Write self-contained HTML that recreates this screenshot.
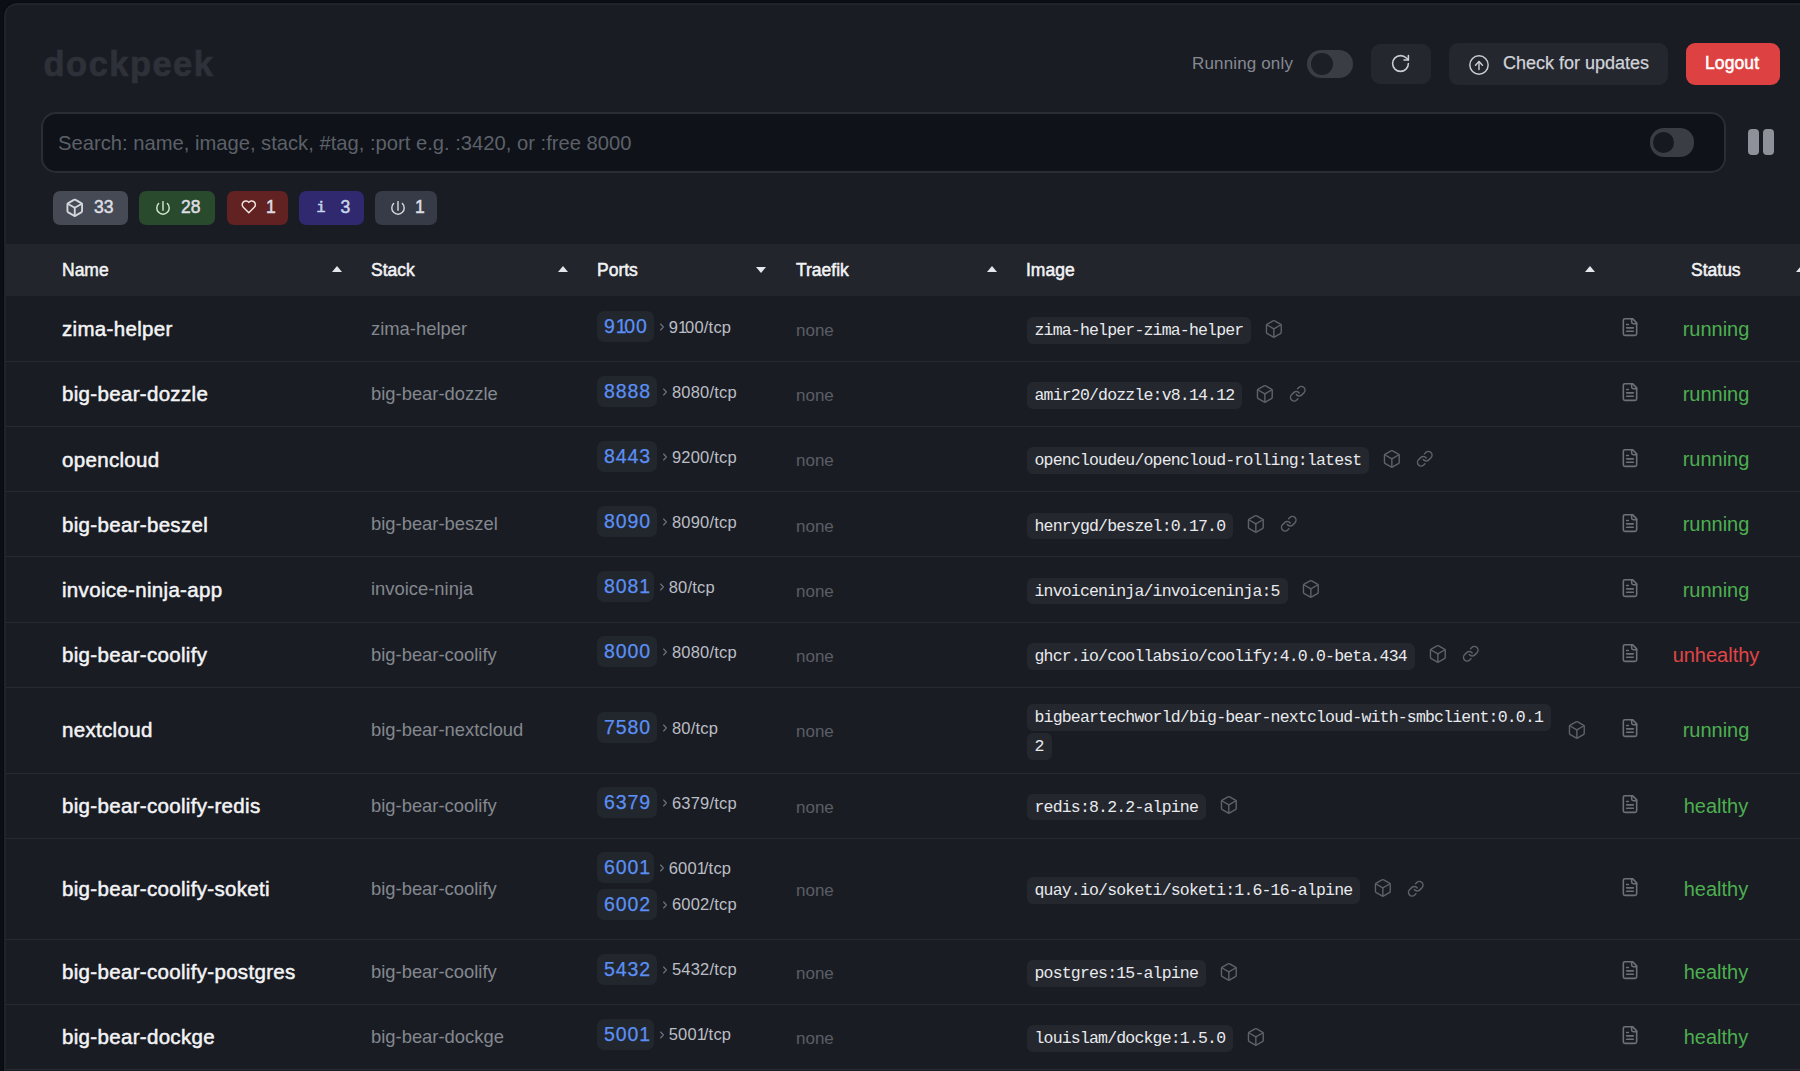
<!DOCTYPE html>
<html><head><meta charset="utf-8">
<style>
*{box-sizing:border-box;margin:0;padding:0}
html,body{width:1800px;height:1071px;overflow:hidden;background:#0b0e15;font-family:"Liberation Sans",sans-serif}
.abs{position:absolute}
.card{position:absolute;left:4px;top:3px;width:1850px;height:1200px;background:#1a1c23;border:2px solid #202328;border-radius:13px;box-shadow:0 0 0 1px #070a10}
.t{position:absolute;white-space:nowrap;line-height:1}
svg{display:block}
.title{left:43.6px;top:46.7px;font-size:34.5px;font-weight:700;-webkit-text-stroke:0.7px #2e3139;color:#2e3139;letter-spacing:1.45px}
.runlbl{left:1192px;top:55px;font-size:17px;letter-spacing:0.15px;color:#858a92}
.toggle{position:absolute;border-radius:14px;background:#3a3d44}
.toggle .k{position:absolute;border-radius:50%;background:#1c1f26}
.btn{position:absolute;background:#24272e;border-radius:9px}
.logout{position:absolute;left:1686px;top:43px;width:94px;height:42px;background:#dd4141;border-radius:9px}
.search{position:absolute;left:41px;top:112px;width:1685px;height:61px;background:#0f1218;border:2px solid #2a2d34;border-radius:15px}
.ph{left:58px;top:133px;font-size:20.2px;color:#5c6169}
.badge{position:absolute;top:191px;height:34px;border-radius:7px}
.bt{position:absolute;font-size:17.5px;font-weight:400;-webkit-text-stroke:0.5px currentColor;line-height:1;top:198.6px;color:#dcdee2}
.thead{position:absolute;left:6px;top:244px;width:1800px;height:52px;background:#22252c}
.th{position:absolute;top:261.5px;font-size:17.5px;font-weight:400;-webkit-text-stroke:0.5px #f2f3f5;color:#f2f3f5;line-height:1}
.arr{position:absolute;width:0;height:0;border-left:5.8px solid transparent;border-right:5.8px solid transparent;margin-left:0.1px}
.up{border-bottom:6px solid #e6e7ea}
.dn{border-top:6px solid #e6e7ea}
.row{position:absolute;left:5px;width:1800px;border-bottom:1px solid #282b32}
.nm{position:absolute;left:62px;font-size:20.5px;font-weight:400;-webkit-text-stroke:0.5px #f3f4f6;letter-spacing:0.32px;color:#f3f4f6;line-height:1}
.st{position:absolute;left:371px;font-size:18.4px;color:#83888f;line-height:1}
.prt{position:absolute;left:597px;height:31px;display:flex;align-items:center}
.pb{height:31px;background:#22262d;border-radius:7px;font-size:19.5px;letter-spacing:0.9px;-webkit-text-stroke:0.25px #5b8ff4;color:#5b8ff4;line-height:31px;padding:0 6.5px 0 7px}
.chev{margin-left:4.5px;margin-top:1px}
.pt{font-size:16.5px;letter-spacing:0.2px;color:#babec5;line-height:1;margin-left:4px;margin-top:1px}
.none{position:absolute;left:796px;font-size:17px;color:#5a5e66;line-height:1}
.code{position:absolute;left:1027px;height:26.8px;background:#24272e;border-radius:6px;font-family:"Liberation Mono",monospace;font-size:16.5px;letter-spacing:-0.82px;color:#e8eaed;line-height:27.2px;padding:0 8px 0 7.5px}
.ic{position:absolute}
.n1{letter-spacing:-2.4px}
.t1{letter-spacing:-2.2px}
.stat{position:absolute;font-size:20px;line-height:1;text-align:center;width:200px;left:1616px}
.g{color:#4caf50}
.rd{color:#e04646}
</style></head><body>
<div class="card"></div>
<div class="t title">dockpeek</div>
<div class="t runlbl">Running only</div>
<div class="toggle" style="left:1307px;top:50px;width:46px;height:28px"><div class="k" style="left:4px;top:3px;width:22px;height:22px"></div></div>
<div class="btn" style="left:1371px;top:44px;width:60px;height:40px">
 <svg class="abs" style="left:19.3px;top:9.3px" width="21" height="21" viewBox="0 0 24 24" fill="none" stroke="#c9cdd3" stroke-width="1.8" stroke-linecap="round" stroke-linejoin="round"><path d="M21 12a9 9 0 1 1-9-9c2.52 0 4.93 1 6.74 2.74L21 8"/><path d="M21 3v5h-5"/></svg>
</div>
<div class="btn" style="left:1449px;top:43px;width:219px;height:42px">
 <svg class="abs" style="left:19px;top:11px" width="22" height="22" viewBox="0 0 24 24" fill="none" stroke="#c9cdd3" stroke-width="1.6" stroke-linecap="round" stroke-linejoin="round"><circle cx="12" cy="12" r="10"/><path d="M8.2 12.2l3.8-4 3.8 4"/><path d="M12 8.4V16.9"/></svg>
</div>
<div class="t" style="left:1503px;top:54px;font-size:18px;-webkit-text-stroke:0.25px #cfd3d9;color:#cfd3d9">Check for updates</div>
<div class="logout"></div>
<div class="t" style="left:1705px;top:54.5px;font-size:17.5px;letter-spacing:0.1px;-webkit-text-stroke:0.5px #fff;color:#fff">Logout</div>

<div class="search"></div>
<div class="t ph">Search: name, image, stack, #tag, :port e.g. :3420, or :free 8000</div>
<div class="toggle" style="left:1650px;top:128px;width:44px;height:29px"><div class="k" style="left:3px;top:4px;width:21px;height:21px;background:#161920"></div></div>
<div class="abs" style="left:1748px;top:129px;width:11px;height:26px;border-radius:4px;background:#8d929a"></div>
<div class="abs" style="left:1763px;top:129px;width:11px;height:26px;border-radius:4px;background:#8d929a"></div>

<!-- badges -->
<div class="badge" style="left:52.5px;width:75.5px;background:#454a55"></div>
<svg class="abs" style="left:65.2px;top:197.7px" width="19.5" height="19.5" viewBox="0 0 24 24" fill="none" stroke="#d3d6db" stroke-width="2.3" stroke-linecap="round" stroke-linejoin="round"><path d="M21 8a2 2 0 0 0-1-1.73l-7-4a2 2 0 0 0-2 0l-7 4A2 2 0 0 0 3 8v8a2 2 0 0 0 1 1.73l7 4a2 2 0 0 0 2 0l7-4A2 2 0 0 0 21 16Z"/><path d="m3.3 7 8.7 5 8.7-5"/><path d="M12 22V12"/></svg>
<div class="bt" style="left:94px">33</div>
<div class="badge" style="left:139px;width:76px;background:#2a4a2e"></div>
<svg class="abs" style="left:154.5px;top:199.5px" width="16" height="16" viewBox="0 0 16 16" fill="none" stroke="#d2e6d2" stroke-width="1.45" stroke-linecap="round"><path d="M8 1.6V10.2"/><path d="M3.6 3.6A6.2 6.2 0 1 0 12.4 3.6"/></svg>
<div class="bt" style="left:181px">28</div>
<div class="badge" style="left:226.7px;width:61.3px;background:#622222"></div>
<svg class="abs" style="left:240.2px;top:198.2px" width="17.6" height="17.6" viewBox="0 0 24 24" fill="none" stroke="#f0e4de" stroke-width="2" stroke-linecap="round" stroke-linejoin="round"><path d="M19.5 12.572l-7.5 7.428l-7.5 -7.428a5 5 0 1 1 7.5 -6.566a5 5 0 1 1 7.5 6.572"/></svg>
<div class="bt" style="left:266px">1</div>
<div class="badge" style="left:299px;width:65px;background:#30296f"></div>
<div class="bt" style="left:316.5px;font-family:'Liberation Mono';font-weight:400;-webkit-text-stroke:0.6px #c8d6ea;font-size:15px;top:201px;color:#c8d6ea">i</div>
<div class="bt" style="left:340.5px;color:#c8d6ea">3</div>
<div class="badge" style="left:375px;width:62px;background:#363b47"></div>
<svg class="abs" style="left:389.7px;top:199.5px" width="16" height="16" viewBox="0 0 16 16" fill="none" stroke="#d3d6db" stroke-width="1.45" stroke-linecap="round"><path d="M8 1.6V10.2"/><path d="M3.6 3.6A6.2 6.2 0 1 0 12.4 3.6"/></svg>
<div class="bt" style="left:415px">1</div>

<!-- table header -->
<div class="thead"></div>
<div class="th" style="left:62px">Name</div><div class="arr up" style="left:332px;top:266px"></div>
<div class="th" style="left:371px">Stack</div><div class="arr up" style="left:558px;top:266px"></div>
<div class="th" style="left:597px">Ports</div><div class="arr dn" style="left:756px;top:267px"></div>
<div class="th" style="left:796px">Traefik</div><div class="arr up" style="left:987px;top:266px"></div>
<div class="th" style="left:1026px">Image</div><div class="arr up" style="left:1585px;top:266px"></div>
<div class="th" style="left:1691px">Status</div><div class="arr up" style="left:1796px;top:266px"></div>

<div id="rows">
<div class="abs" style="left:6px;top:361px;width:1800px;height:1px;background:#272a31"></div>
<div class="nm" style="top:319.25px">zima-helper</div>
<div class="st" style="top:320.02px">zima-helper</div>
<div class="prt" style="top:310.80px"><div class="pb">9<span class="n1">1</span>00</div><div class="chev"><svg width="6" height="10" viewBox="0 0 6 10" fill="none" stroke="#70757d" stroke-width="1.1" stroke-linecap="round" stroke-linejoin="round"><path d="M1.6 2L4.4 5L1.6 8"/></svg></div><div class="pt">9<span class="t1">1</span>00/tcp</div></div>
<div class="none" style="top:322.21px">none</div>
<div class="code" style="top:317.15px">zima-helper-zima-helper</div>
<div class="ic" style="left:1264.2px;top:318.75px"><svg width="19.7" height="19.7" viewBox="0 0 24 24" fill="none" stroke="#5d626b" stroke-width="1.7" stroke-linecap="round" stroke-linejoin="round"><path d="M21 8a2 2 0 0 0-1-1.73l-7-4a2 2 0 0 0-2 0l-7 4A2 2 0 0 0 3 8v8a2 2 0 0 0 1 1.73l7 4a2 2 0 0 0 2 0l7-4A2 2 0 0 0 21 16Z"/><path d="m3.3 7 8.7 5 8.7-5"/><path d="M12 22V12"/></svg></div>
<div class="ic" style="left:1620px;top:317.30px"><svg width="20" height="20" viewBox="0 0 24 24" fill="none" stroke="#6c7179" stroke-width="1.9" stroke-linecap="round" stroke-linejoin="round"><path d="M15 2H6a2 2 0 0 0-2 2v16a2 2 0 0 0 2 2h12a2 2 0 0 0 2-2V7Z"/><path d="M14 2v4a2 2 0 0 0 2 2h4"/><path d="M10 9H8"/><path d="M16 13H8"/><path d="M16 17H8"/></svg></div>
<div class="stat g" style="top:319.07px">running</div>
<div class="abs" style="left:6px;top:426px;width:1800px;height:1px;background:#272a31"></div>
<div class="nm" style="top:384.40px">big-bear-dozzle</div>
<div class="st" style="top:385.17px">big-bear-dozzle</div>
<div class="prt" style="top:375.95px"><div class="pb">8888</div><div class="chev"><svg width="6" height="10" viewBox="0 0 6 10" fill="none" stroke="#70757d" stroke-width="1.1" stroke-linecap="round" stroke-linejoin="round"><path d="M1.6 2L4.4 5L1.6 8"/></svg></div><div class="pt">8080/tcp</div></div>
<div class="none" style="top:387.36px">none</div>
<div class="code" style="top:382.30px">amir20/dozzle:v8.14.12</div>
<div class="ic" style="left:1255.2px;top:383.90px"><svg width="19.7" height="19.7" viewBox="0 0 24 24" fill="none" stroke="#5d626b" stroke-width="1.7" stroke-linecap="round" stroke-linejoin="round"><path d="M21 8a2 2 0 0 0-1-1.73l-7-4a2 2 0 0 0-2 0l-7 4A2 2 0 0 0 3 8v8a2 2 0 0 0 1 1.73l7 4a2 2 0 0 0 2 0l7-4A2 2 0 0 0 21 16Z"/><path d="m3.3 7 8.7 5 8.7-5"/><path d="M12 22V12"/></svg></div>
<div class="ic" style="left:1289.1px;top:385.00px"><svg width="17.5" height="17.5" viewBox="0 0 24 24" fill="none" stroke="#5d626b" stroke-width="2" stroke-linecap="round" stroke-linejoin="round"><path d="M10 13a5 5 0 0 0 7.54.54l3-3a5 5 0 0 0-7.07-7.07l-1.72 1.71"/><path d="M14 11a5 5 0 0 0-7.54-.54l-3 3a5 5 0 0 0 7.07 7.07l1.71-1.71"/></svg></div>
<div class="ic" style="left:1620px;top:382.45px"><svg width="20" height="20" viewBox="0 0 24 24" fill="none" stroke="#6c7179" stroke-width="1.9" stroke-linecap="round" stroke-linejoin="round"><path d="M15 2H6a2 2 0 0 0-2 2v16a2 2 0 0 0 2 2h12a2 2 0 0 0 2-2V7Z"/><path d="M14 2v4a2 2 0 0 0 2 2h4"/><path d="M10 9H8"/><path d="M16 13H8"/><path d="M16 17H8"/></svg></div>
<div class="stat g" style="top:384.22px">running</div>
<div class="abs" style="left:6px;top:491px;width:1800px;height:1px;background:#272a31"></div>
<div class="nm" style="top:449.50px">opencloud</div>
<div class="prt" style="top:441.05px"><div class="pb">8443</div><div class="chev"><svg width="6" height="10" viewBox="0 0 6 10" fill="none" stroke="#70757d" stroke-width="1.1" stroke-linecap="round" stroke-linejoin="round"><path d="M1.6 2L4.4 5L1.6 8"/></svg></div><div class="pt">9200/tcp</div></div>
<div class="none" style="top:452.46px">none</div>
<div class="code" style="top:447.40px">opencloudeu/opencloud-rolling:latest</div>
<div class="ic" style="left:1382.3px;top:449.00px"><svg width="19.7" height="19.7" viewBox="0 0 24 24" fill="none" stroke="#5d626b" stroke-width="1.7" stroke-linecap="round" stroke-linejoin="round"><path d="M21 8a2 2 0 0 0-1-1.73l-7-4a2 2 0 0 0-2 0l-7 4A2 2 0 0 0 3 8v8a2 2 0 0 0 1 1.73l7 4a2 2 0 0 0 2 0l7-4A2 2 0 0 0 21 16Z"/><path d="m3.3 7 8.7 5 8.7-5"/><path d="M12 22V12"/></svg></div>
<div class="ic" style="left:1416.2px;top:450.10px"><svg width="17.5" height="17.5" viewBox="0 0 24 24" fill="none" stroke="#5d626b" stroke-width="2" stroke-linecap="round" stroke-linejoin="round"><path d="M10 13a5 5 0 0 0 7.54.54l3-3a5 5 0 0 0-7.07-7.07l-1.72 1.71"/><path d="M14 11a5 5 0 0 0-7.54-.54l-3 3a5 5 0 0 0 7.07 7.07l1.71-1.71"/></svg></div>
<div class="ic" style="left:1620px;top:447.55px"><svg width="20" height="20" viewBox="0 0 24 24" fill="none" stroke="#6c7179" stroke-width="1.9" stroke-linecap="round" stroke-linejoin="round"><path d="M15 2H6a2 2 0 0 0-2 2v16a2 2 0 0 0 2 2h12a2 2 0 0 0 2-2V7Z"/><path d="M14 2v4a2 2 0 0 0 2 2h4"/><path d="M10 9H8"/><path d="M16 13H8"/><path d="M16 17H8"/></svg></div>
<div class="stat g" style="top:449.32px">running</div>
<div class="abs" style="left:6px;top:556px;width:1800px;height:1px;background:#272a31"></div>
<div class="nm" style="top:514.60px">big-bear-beszel</div>
<div class="st" style="top:515.37px">big-bear-beszel</div>
<div class="prt" style="top:506.15px"><div class="pb">8090</div><div class="chev"><svg width="6" height="10" viewBox="0 0 6 10" fill="none" stroke="#70757d" stroke-width="1.1" stroke-linecap="round" stroke-linejoin="round"><path d="M1.6 2L4.4 5L1.6 8"/></svg></div><div class="pt">8090/tcp</div></div>
<div class="none" style="top:517.56px">none</div>
<div class="code" style="top:512.50px">henrygd/beszel:0.17.0</div>
<div class="ic" style="left:1246.1px;top:514.10px"><svg width="19.7" height="19.7" viewBox="0 0 24 24" fill="none" stroke="#5d626b" stroke-width="1.7" stroke-linecap="round" stroke-linejoin="round"><path d="M21 8a2 2 0 0 0-1-1.73l-7-4a2 2 0 0 0-2 0l-7 4A2 2 0 0 0 3 8v8a2 2 0 0 0 1 1.73l7 4a2 2 0 0 0 2 0l7-4A2 2 0 0 0 21 16Z"/><path d="m3.3 7 8.7 5 8.7-5"/><path d="M12 22V12"/></svg></div>
<div class="ic" style="left:1280.0px;top:515.20px"><svg width="17.5" height="17.5" viewBox="0 0 24 24" fill="none" stroke="#5d626b" stroke-width="2" stroke-linecap="round" stroke-linejoin="round"><path d="M10 13a5 5 0 0 0 7.54.54l3-3a5 5 0 0 0-7.07-7.07l-1.72 1.71"/><path d="M14 11a5 5 0 0 0-7.54-.54l-3 3a5 5 0 0 0 7.07 7.07l1.71-1.71"/></svg></div>
<div class="ic" style="left:1620px;top:512.65px"><svg width="20" height="20" viewBox="0 0 24 24" fill="none" stroke="#6c7179" stroke-width="1.9" stroke-linecap="round" stroke-linejoin="round"><path d="M15 2H6a2 2 0 0 0-2 2v16a2 2 0 0 0 2 2h12a2 2 0 0 0 2-2V7Z"/><path d="M14 2v4a2 2 0 0 0 2 2h4"/><path d="M10 9H8"/><path d="M16 13H8"/><path d="M16 17H8"/></svg></div>
<div class="stat g" style="top:514.42px">running</div>
<div class="abs" style="left:6px;top:622px;width:1800px;height:1px;background:#272a31"></div>
<div class="nm" style="top:579.70px">invoice-ninja-app</div>
<div class="st" style="top:580.47px">invoice-ninja</div>
<div class="prt" style="top:571.25px"><div class="pb">808<span class="n1">1</span></div><div class="chev"><svg width="6" height="10" viewBox="0 0 6 10" fill="none" stroke="#70757d" stroke-width="1.1" stroke-linecap="round" stroke-linejoin="round"><path d="M1.6 2L4.4 5L1.6 8"/></svg></div><div class="pt">80/tcp</div></div>
<div class="none" style="top:582.66px">none</div>
<div class="code" style="top:577.60px">invoiceninja/invoiceninja:5</div>
<div class="ic" style="left:1300.6px;top:579.20px"><svg width="19.7" height="19.7" viewBox="0 0 24 24" fill="none" stroke="#5d626b" stroke-width="1.7" stroke-linecap="round" stroke-linejoin="round"><path d="M21 8a2 2 0 0 0-1-1.73l-7-4a2 2 0 0 0-2 0l-7 4A2 2 0 0 0 3 8v8a2 2 0 0 0 1 1.73l7 4a2 2 0 0 0 2 0l7-4A2 2 0 0 0 21 16Z"/><path d="m3.3 7 8.7 5 8.7-5"/><path d="M12 22V12"/></svg></div>
<div class="ic" style="left:1620px;top:577.75px"><svg width="20" height="20" viewBox="0 0 24 24" fill="none" stroke="#6c7179" stroke-width="1.9" stroke-linecap="round" stroke-linejoin="round"><path d="M15 2H6a2 2 0 0 0-2 2v16a2 2 0 0 0 2 2h12a2 2 0 0 0 2-2V7Z"/><path d="M14 2v4a2 2 0 0 0 2 2h4"/><path d="M10 9H8"/><path d="M16 13H8"/><path d="M16 17H8"/></svg></div>
<div class="stat g" style="top:579.52px">running</div>
<div class="abs" style="left:6px;top:687px;width:1800px;height:1px;background:#272a31"></div>
<div class="nm" style="top:644.85px">big-bear-coolify</div>
<div class="st" style="top:645.62px">big-bear-coolify</div>
<div class="prt" style="top:636.40px"><div class="pb">8000</div><div class="chev"><svg width="6" height="10" viewBox="0 0 6 10" fill="none" stroke="#70757d" stroke-width="1.1" stroke-linecap="round" stroke-linejoin="round"><path d="M1.6 2L4.4 5L1.6 8"/></svg></div><div class="pt">8080/tcp</div></div>
<div class="none" style="top:647.81px">none</div>
<div class="code" style="top:642.75px">ghcr.io/coollabsio/coolify:4.0.0-beta.434</div>
<div class="ic" style="left:1427.7px;top:644.35px"><svg width="19.7" height="19.7" viewBox="0 0 24 24" fill="none" stroke="#5d626b" stroke-width="1.7" stroke-linecap="round" stroke-linejoin="round"><path d="M21 8a2 2 0 0 0-1-1.73l-7-4a2 2 0 0 0-2 0l-7 4A2 2 0 0 0 3 8v8a2 2 0 0 0 1 1.73l7 4a2 2 0 0 0 2 0l7-4A2 2 0 0 0 21 16Z"/><path d="m3.3 7 8.7 5 8.7-5"/><path d="M12 22V12"/></svg></div>
<div class="ic" style="left:1461.6px;top:645.45px"><svg width="17.5" height="17.5" viewBox="0 0 24 24" fill="none" stroke="#5d626b" stroke-width="2" stroke-linecap="round" stroke-linejoin="round"><path d="M10 13a5 5 0 0 0 7.54.54l3-3a5 5 0 0 0-7.07-7.07l-1.72 1.71"/><path d="M14 11a5 5 0 0 0-7.54-.54l-3 3a5 5 0 0 0 7.07 7.07l1.71-1.71"/></svg></div>
<div class="ic" style="left:1620px;top:642.90px"><svg width="20" height="20" viewBox="0 0 24 24" fill="none" stroke="#6c7179" stroke-width="1.9" stroke-linecap="round" stroke-linejoin="round"><path d="M15 2H6a2 2 0 0 0-2 2v16a2 2 0 0 0 2 2h12a2 2 0 0 0 2-2V7Z"/><path d="M14 2v4a2 2 0 0 0 2 2h4"/><path d="M10 9H8"/><path d="M16 13H8"/><path d="M16 17H8"/></svg></div>
<div class="stat rd" style="top:644.67px">unhealthy</div>
<div class="abs" style="left:6px;top:773px;width:1800px;height:1px;background:#272a31"></div>
<div class="nm" style="top:720.35px">nextcloud</div>
<div class="st" style="top:721.12px">big-bear-nextcloud</div>
<div class="prt" style="top:711.90px"><div class="pb">7580</div><div class="chev"><svg width="6" height="10" viewBox="0 0 6 10" fill="none" stroke="#70757d" stroke-width="1.1" stroke-linecap="round" stroke-linejoin="round"><path d="M1.6 2L4.4 5L1.6 8"/></svg></div><div class="pt">80/tcp</div></div>
<div class="none" style="top:723.31px">none</div>
<div class="code" style="top:703.90px">bigbeartechworld/big-bear-nextcloud-with-smbclient:0.0.1</div>
<div class="code" style="top:732.90px">2</div>
<div class="ic" style="left:1567.2px;top:719.85px"><svg width="19.7" height="19.7" viewBox="0 0 24 24" fill="none" stroke="#5d626b" stroke-width="1.7" stroke-linecap="round" stroke-linejoin="round"><path d="M21 8a2 2 0 0 0-1-1.73l-7-4a2 2 0 0 0-2 0l-7 4A2 2 0 0 0 3 8v8a2 2 0 0 0 1 1.73l7 4a2 2 0 0 0 2 0l7-4A2 2 0 0 0 21 16Z"/><path d="m3.3 7 8.7 5 8.7-5"/><path d="M12 22V12"/></svg></div>
<div class="ic" style="left:1620px;top:718.40px"><svg width="20" height="20" viewBox="0 0 24 24" fill="none" stroke="#6c7179" stroke-width="1.9" stroke-linecap="round" stroke-linejoin="round"><path d="M15 2H6a2 2 0 0 0-2 2v16a2 2 0 0 0 2 2h12a2 2 0 0 0 2-2V7Z"/><path d="M14 2v4a2 2 0 0 0 2 2h4"/><path d="M10 9H8"/><path d="M16 13H8"/><path d="M16 17H8"/></svg></div>
<div class="stat g" style="top:720.17px">running</div>
<div class="abs" style="left:6px;top:838px;width:1800px;height:1px;background:#272a31"></div>
<div class="nm" style="top:795.80px">big-bear-coolify-redis</div>
<div class="st" style="top:796.57px">big-bear-coolify</div>
<div class="prt" style="top:787.35px"><div class="pb">6379</div><div class="chev"><svg width="6" height="10" viewBox="0 0 6 10" fill="none" stroke="#70757d" stroke-width="1.1" stroke-linecap="round" stroke-linejoin="round"><path d="M1.6 2L4.4 5L1.6 8"/></svg></div><div class="pt">6379/tcp</div></div>
<div class="none" style="top:798.76px">none</div>
<div class="code" style="top:793.70px">redis:8.2.2-alpine</div>
<div class="ic" style="left:1218.8px;top:795.30px"><svg width="19.7" height="19.7" viewBox="0 0 24 24" fill="none" stroke="#5d626b" stroke-width="1.7" stroke-linecap="round" stroke-linejoin="round"><path d="M21 8a2 2 0 0 0-1-1.73l-7-4a2 2 0 0 0-2 0l-7 4A2 2 0 0 0 3 8v8a2 2 0 0 0 1 1.73l7 4a2 2 0 0 0 2 0l7-4A2 2 0 0 0 21 16Z"/><path d="m3.3 7 8.7 5 8.7-5"/><path d="M12 22V12"/></svg></div>
<div class="ic" style="left:1620px;top:793.85px"><svg width="20" height="20" viewBox="0 0 24 24" fill="none" stroke="#6c7179" stroke-width="1.9" stroke-linecap="round" stroke-linejoin="round"><path d="M15 2H6a2 2 0 0 0-2 2v16a2 2 0 0 0 2 2h12a2 2 0 0 0 2-2V7Z"/><path d="M14 2v4a2 2 0 0 0 2 2h4"/><path d="M10 9H8"/><path d="M16 13H8"/><path d="M16 17H8"/></svg></div>
<div class="stat g" style="top:795.62px">healthy</div>
<div class="abs" style="left:6px;top:939px;width:1800px;height:1px;background:#272a31"></div>
<div class="nm" style="top:878.90px">big-bear-coolify-soketi</div>
<div class="st" style="top:879.67px">big-bear-coolify</div>
<div class="prt" style="top:852.20px"><div class="pb">600<span class="n1">1</span></div><div class="chev"><svg width="6" height="10" viewBox="0 0 6 10" fill="none" stroke="#70757d" stroke-width="1.1" stroke-linecap="round" stroke-linejoin="round"><path d="M1.6 2L4.4 5L1.6 8"/></svg></div><div class="pt">600<span class="t1">1</span>/tcp</div></div>
<div class="prt" style="top:888.70px"><div class="pb">6002</div><div class="chev"><svg width="6" height="10" viewBox="0 0 6 10" fill="none" stroke="#70757d" stroke-width="1.1" stroke-linecap="round" stroke-linejoin="round"><path d="M1.6 2L4.4 5L1.6 8"/></svg></div><div class="pt">6002/tcp</div></div>
<div class="none" style="top:881.86px">none</div>
<div class="code" style="top:876.80px">quay.io/soketi/soketi:1.6-16-alpine</div>
<div class="ic" style="left:1373.2px;top:878.40px"><svg width="19.7" height="19.7" viewBox="0 0 24 24" fill="none" stroke="#5d626b" stroke-width="1.7" stroke-linecap="round" stroke-linejoin="round"><path d="M21 8a2 2 0 0 0-1-1.73l-7-4a2 2 0 0 0-2 0l-7 4A2 2 0 0 0 3 8v8a2 2 0 0 0 1 1.73l7 4a2 2 0 0 0 2 0l7-4A2 2 0 0 0 21 16Z"/><path d="m3.3 7 8.7 5 8.7-5"/><path d="M12 22V12"/></svg></div>
<div class="ic" style="left:1407.1px;top:879.50px"><svg width="17.5" height="17.5" viewBox="0 0 24 24" fill="none" stroke="#5d626b" stroke-width="2" stroke-linecap="round" stroke-linejoin="round"><path d="M10 13a5 5 0 0 0 7.54.54l3-3a5 5 0 0 0-7.07-7.07l-1.72 1.71"/><path d="M14 11a5 5 0 0 0-7.54-.54l-3 3a5 5 0 0 0 7.07 7.07l1.71-1.71"/></svg></div>
<div class="ic" style="left:1620px;top:876.95px"><svg width="20" height="20" viewBox="0 0 24 24" fill="none" stroke="#6c7179" stroke-width="1.9" stroke-linecap="round" stroke-linejoin="round"><path d="M15 2H6a2 2 0 0 0-2 2v16a2 2 0 0 0 2 2h12a2 2 0 0 0 2-2V7Z"/><path d="M14 2v4a2 2 0 0 0 2 2h4"/><path d="M10 9H8"/><path d="M16 13H8"/><path d="M16 17H8"/></svg></div>
<div class="stat g" style="top:878.72px">healthy</div>
<div class="abs" style="left:6px;top:1004px;width:1800px;height:1px;background:#272a31"></div>
<div class="nm" style="top:962.00px">big-bear-coolify-postgres</div>
<div class="st" style="top:962.77px">big-bear-coolify</div>
<div class="prt" style="top:953.55px"><div class="pb">5432</div><div class="chev"><svg width="6" height="10" viewBox="0 0 6 10" fill="none" stroke="#70757d" stroke-width="1.1" stroke-linecap="round" stroke-linejoin="round"><path d="M1.6 2L4.4 5L1.6 8"/></svg></div><div class="pt">5432/tcp</div></div>
<div class="none" style="top:964.96px">none</div>
<div class="code" style="top:959.90px">postgres:15-alpine</div>
<div class="ic" style="left:1218.8px;top:961.50px"><svg width="19.7" height="19.7" viewBox="0 0 24 24" fill="none" stroke="#5d626b" stroke-width="1.7" stroke-linecap="round" stroke-linejoin="round"><path d="M21 8a2 2 0 0 0-1-1.73l-7-4a2 2 0 0 0-2 0l-7 4A2 2 0 0 0 3 8v8a2 2 0 0 0 1 1.73l7 4a2 2 0 0 0 2 0l7-4A2 2 0 0 0 21 16Z"/><path d="m3.3 7 8.7 5 8.7-5"/><path d="M12 22V12"/></svg></div>
<div class="ic" style="left:1620px;top:960.05px"><svg width="20" height="20" viewBox="0 0 24 24" fill="none" stroke="#6c7179" stroke-width="1.9" stroke-linecap="round" stroke-linejoin="round"><path d="M15 2H6a2 2 0 0 0-2 2v16a2 2 0 0 0 2 2h12a2 2 0 0 0 2-2V7Z"/><path d="M14 2v4a2 2 0 0 0 2 2h4"/><path d="M10 9H8"/><path d="M16 13H8"/><path d="M16 17H8"/></svg></div>
<div class="stat g" style="top:961.82px">healthy</div>
<div class="abs" style="left:6px;top:1069px;width:1800px;height:1px;background:#272a31"></div>
<div class="nm" style="top:1027.10px">big-bear-dockge</div>
<div class="st" style="top:1027.87px">big-bear-dockge</div>
<div class="prt" style="top:1018.65px"><div class="pb">500<span class="n1">1</span></div><div class="chev"><svg width="6" height="10" viewBox="0 0 6 10" fill="none" stroke="#70757d" stroke-width="1.1" stroke-linecap="round" stroke-linejoin="round"><path d="M1.6 2L4.4 5L1.6 8"/></svg></div><div class="pt">500<span class="t1">1</span>/tcp</div></div>
<div class="none" style="top:1030.06px">none</div>
<div class="code" style="top:1025.00px">louislam/dockge:1.5.0</div>
<div class="ic" style="left:1246.1px;top:1026.60px"><svg width="19.7" height="19.7" viewBox="0 0 24 24" fill="none" stroke="#5d626b" stroke-width="1.7" stroke-linecap="round" stroke-linejoin="round"><path d="M21 8a2 2 0 0 0-1-1.73l-7-4a2 2 0 0 0-2 0l-7 4A2 2 0 0 0 3 8v8a2 2 0 0 0 1 1.73l7 4a2 2 0 0 0 2 0l7-4A2 2 0 0 0 21 16Z"/><path d="m3.3 7 8.7 5 8.7-5"/><path d="M12 22V12"/></svg></div>
<div class="ic" style="left:1620px;top:1025.15px"><svg width="20" height="20" viewBox="0 0 24 24" fill="none" stroke="#6c7179" stroke-width="1.9" stroke-linecap="round" stroke-linejoin="round"><path d="M15 2H6a2 2 0 0 0-2 2v16a2 2 0 0 0 2 2h12a2 2 0 0 0 2-2V7Z"/><path d="M14 2v4a2 2 0 0 0 2 2h4"/><path d="M10 9H8"/><path d="M16 13H8"/><path d="M16 17H8"/></svg></div>
<div class="stat g" style="top:1026.92px">healthy</div>
</div><!--end-->
</body></html>
